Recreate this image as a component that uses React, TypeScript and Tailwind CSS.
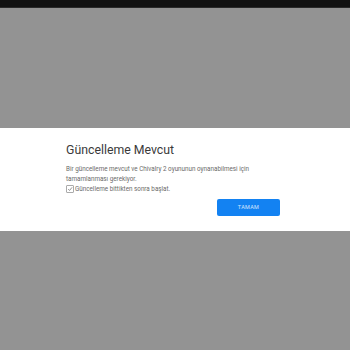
export default function App() {
  return (
    <div className="w-[350px] h-[350px] flex flex-col bg-[#939393] font-['Roboto',sans-serif]">
      <div className="h-[8px] bg-[#121212] border-b border-[#2a2a2a]" />
      <div className="h-[120px]" />
      <div className="h-[103px] bg-white px-[66px] pt-[14px]">
        <h1 className="text-[12.3px] leading-[16px] text-[#3a3a3a]">Güncelleme Mevcut</h1>
        <p className="mt-[6px] text-[6.3px] leading-[10px] text-[#6a6a6a]">
          Bir güncelleme mevcut ve Chivalry 2 oyununun oynanabilmesi için tamamlanması gerekiyor.
        </p>
        <label className="flex items-center gap-[1px] text-[6.3px] leading-[10px] text-[#6a6a6a]">
          <span className="w-[8px] h-[8px] border border-[#aaa] rounded-[1px] flex items-center justify-center">
            <svg viewBox="0 0 10 10" className="w-[8px] h-[8px]">
              <path d="M2 5.2 L4.2 7.4 L8.5 2.2" fill="none" stroke="#666" strokeWidth="1.2" />
            </svg>
          </span>
          Güncelleme bittikten sonra başlat.
        </label>
        <div className="flex justify-end mr-[4px] mt-[5px]">
          <button className="w-[63px] h-[17px] rounded-[2px] bg-[#1382f2] text-white/80 text-[5.5px] tracking-[0.3px]">
            TAMAM
          </button>
        </div>
      </div>
    </div>
  );
}
